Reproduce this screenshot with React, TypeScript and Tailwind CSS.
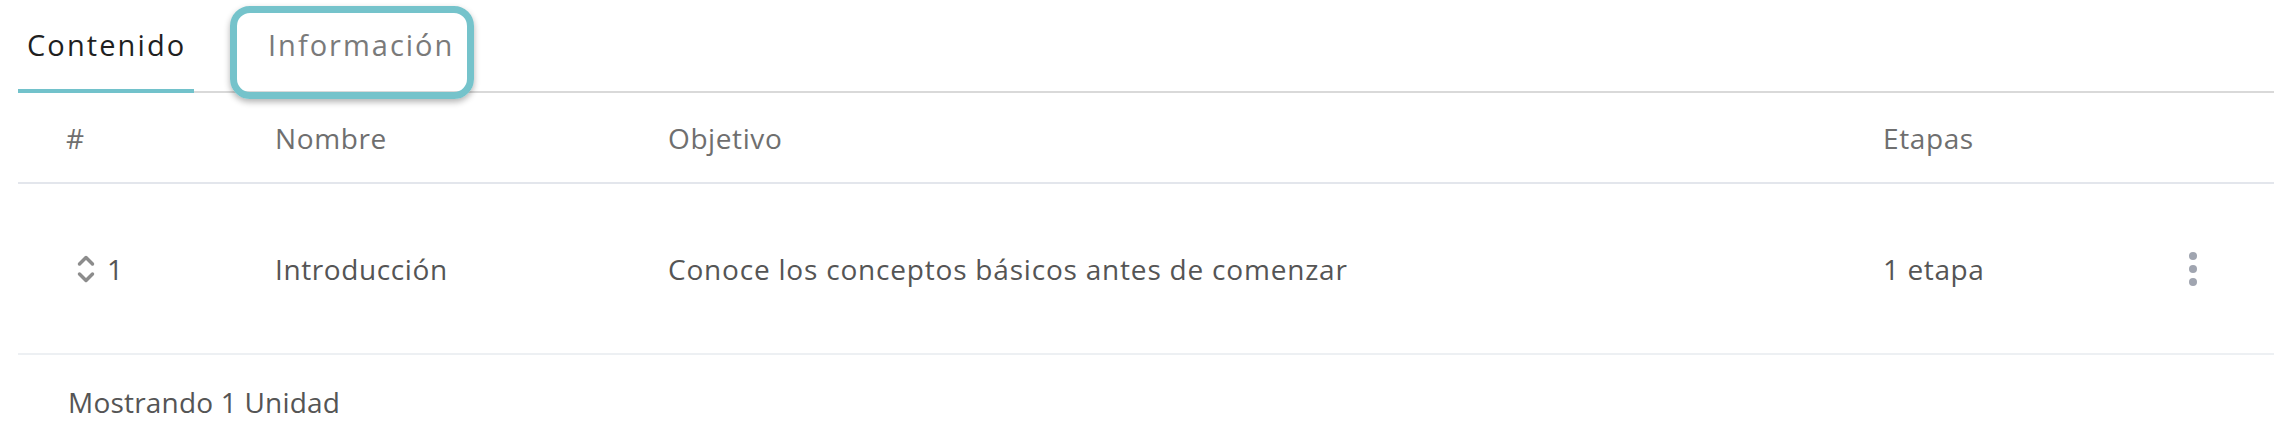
import React from 'react'

/**
 * Units table with tabs - shows course content units
 */
export default function App() {
  return (
    <div className="w-full h-[448px] bg-white text-[28px] leading-[40px] tracking-[0.6px] font-['Open_Sans',sans-serif]">
      {/* Tabs */}
      <div className="ml-[18px] flex h-[93px] border-b-2 border-[#d9d9d9]">
        <div className="h-[93px] w-[176px] -mb-[2px] border-b-4 border-[#72c2cb] pl-[9px] pt-[25px] text-[29px] tracking-[2.1px] text-[#1f1f1f]">
          Contenido
        </div>
        <div className="relative ml-[74px] pt-[25px] text-[29px] tracking-[2px] text-[#7a7a7a]">
          Información
          <div className="absolute -left-[38px] top-[6px] h-[93px] w-[244px] rounded-[20px] border-[7px] border-[#75c3cb] shadow-[0_3px_6px_rgba(0,0,0,0.3)]" />
        </div>
      </div>

      {/* Header */}
      <div className="ml-[18px] grid h-[91px] grid-cols-[257px_393px_1215px_267px_86px] items-center border-b-2 border-[#e3e6ec] text-[#6f6f6f]">
        <div className="pl-[48px]">#</div>
        <div>Nombre</div>
        <div>Objetivo</div>
        <div>Etapas</div>
        <div />
      </div>

      {/* Row */}
      <div className="ml-[18px] grid h-[171px] grid-cols-[257px_393px_1215px_267px_86px] items-center border-b-2 border-[#edf0f3] text-[#555555]">
        <div className="flex items-center gap-[12px] pl-[59px]">
          <svg width="18" height="28" viewBox="0 0 18 28" fill="none" stroke="#8c8c8c" strokeWidth="3.5" strokeLinecap="round" strokeLinejoin="round">
            <polyline points="2.5,9 9,2.5 15.5,9" />
            <polyline points="2.5,19 9,25.5 15.5,19" />
          </svg>
          <span>1</span>
        </div>
        <div>Introducción</div>
        <div className="tracking-[0.8px]">Conoce los conceptos básicos antes de comenzar</div>
        <div>1 etapa</div>
        <div className="flex flex-col items-center gap-[5px]">
          <span className="h-[8px] w-[8px] rounded-full bg-[#a0a5b0]" />
          <span className="h-[8px] w-[8px] rounded-full bg-[#a0a5b0]" />
          <span className="h-[8px] w-[8px] rounded-full bg-[#a0a5b0]" />
        </div>
      </div>

      {/* Footer */}
      <div className="pl-[68px] pt-[27px] tracking-[0.2px] text-[#555555]">Mostrando 1 Unidad</div>
    </div>
  )
}
